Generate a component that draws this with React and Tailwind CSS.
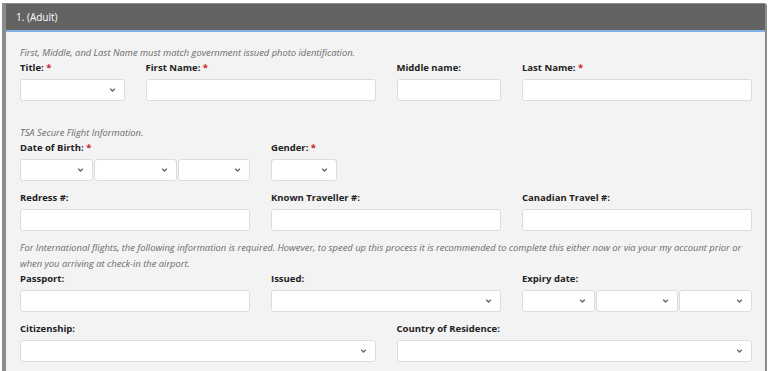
import React from 'react';

const font = { fontFamily: '"Open Sans", "Liberation Sans", sans-serif' };

const Chevron = () => (
  <svg width="7" height="5" viewBox="0 0 7 5" className="absolute right-[8px] top-1/2 -translate-y-1/2">
    <path d="M1.2 1.2 L3.5 3.5 L5.8 1.2" fill="none" stroke="#666" strokeWidth="1.3" />
  </svg>
);

const Label = ({ children, req }) => (
  <div className="text-[9.5px] font-bold text-[#222] leading-[13px] mb-[5px] h-[13px]">
    {children}
    {req && <span className="text-[#d21f1f]"> *</span>}
  </div>
);

const Input = ({ className = '' }) => (
  <div className={`h-[22px] bg-white border border-[#dcdcdc] rounded-[3px] ${className}`} />
);

const Select = ({ className = '' }) => (
  <div className={`relative h-[22px] bg-white border border-[#dcdcdc] rounded-[3px] ${className}`}>
    <Chevron />
  </div>
);

const Note = ({ children }) => (
  <p className="text-[9.35px] italic text-[#6a6a6a] leading-[16px]">{children}</p>
);

export default function App() {
  return (
    <div className="bg-white w-[770px] h-[371px] pt-[3px] pl-[2px] overflow-hidden" style={font}>
      <div className="w-[765px] border-l-[4px] border-t border-r-[2px] border-[#8c8c8c] rounded-tr-[3px] bg-[#f3f3f3] h-[380px]">
        <div className="h-[28px] bg-[#636363] border-b-[2px] border-[#7fb2e0] flex items-center pl-[10px] text-white text-[10px]">
          1. (Adult)
        </div>
        <div className="pl-[14px] pr-[13px] pt-[13px]">
          <Note>First, Middle, and Last Name must match government issued photo identification.</Note>
          <div className="grid grid-cols-12 gap-x-[21px]">
            <div className="col-span-2">
              <Label req>Title:</Label>
              <Select />
            </div>
            <div className="col-span-4">
              <Label req>First Name:</Label>
              <Input />
            </div>
            <div className="col-span-2">
              <Label>Middle name:</Label>
              <Input />
            </div>
            <div className="col-span-4">
              <Label req>Last Name:</Label>
              <Input />
            </div>
          </div>

          <div className="mt-[24px]">
            <Note>TSA Secure Flight Information.</Note>
          </div>
          <div className="grid grid-cols-12 gap-x-[21px]">
            <div className="col-span-4">
              <Label req>Date of Birth:</Label>
              <div className="flex gap-[1px]">
                <Select className="w-[73px]" />
                <Select className="w-[83px]" />
                <Select className="flex-1" />
              </div>
            </div>
            <div className="col-span-2">
              <Label req>Gender:</Label>
              <Select className="w-[66px]" />
            </div>
          </div>

          <div className="grid grid-cols-12 gap-x-[21px] mt-[10px]">
            <div className="col-span-4">
              <Label>Redress #:</Label>
              <Input />
            </div>
            <div className="col-span-4">
              <Label>Known Traveller #:</Label>
              <Input />
            </div>
            <div className="col-span-4">
              <Label>Canadian Travel #:</Label>
              <Input />
            </div>
          </div>

          <div className="mt-[9px]">
            <Note>
              For International flights, the following information is required. However, to speed up this process it is recommended to complete this either now or via your my account prior or when you arriving at check-in the airport.
            </Note>
          </div>
          <div className="grid grid-cols-12 gap-x-[21px]">
            <div className="col-span-4">
              <Label>Passport:</Label>
              <Input />
            </div>
            <div className="col-span-4">
              <Label>Issued:</Label>
              <Select />
            </div>
            <div className="col-span-4">
              <Label>Expiry date:</Label>
              <div className="flex gap-[1px]">
                <Select className="w-[73px]" />
                <Select className="w-[82px]" />
                <Select className="flex-1" />
              </div>
            </div>
          </div>

          <div className="grid grid-cols-12 gap-x-[21px] mt-[10px]">
            <div className="col-span-6">
              <Label>Citizenship:</Label>
              <Select />
            </div>
            <div className="col-span-6">
              <Label>Country of Residence:</Label>
              <Select />
            </div>
          </div>
        </div>
      </div>
    </div>
  );
}
